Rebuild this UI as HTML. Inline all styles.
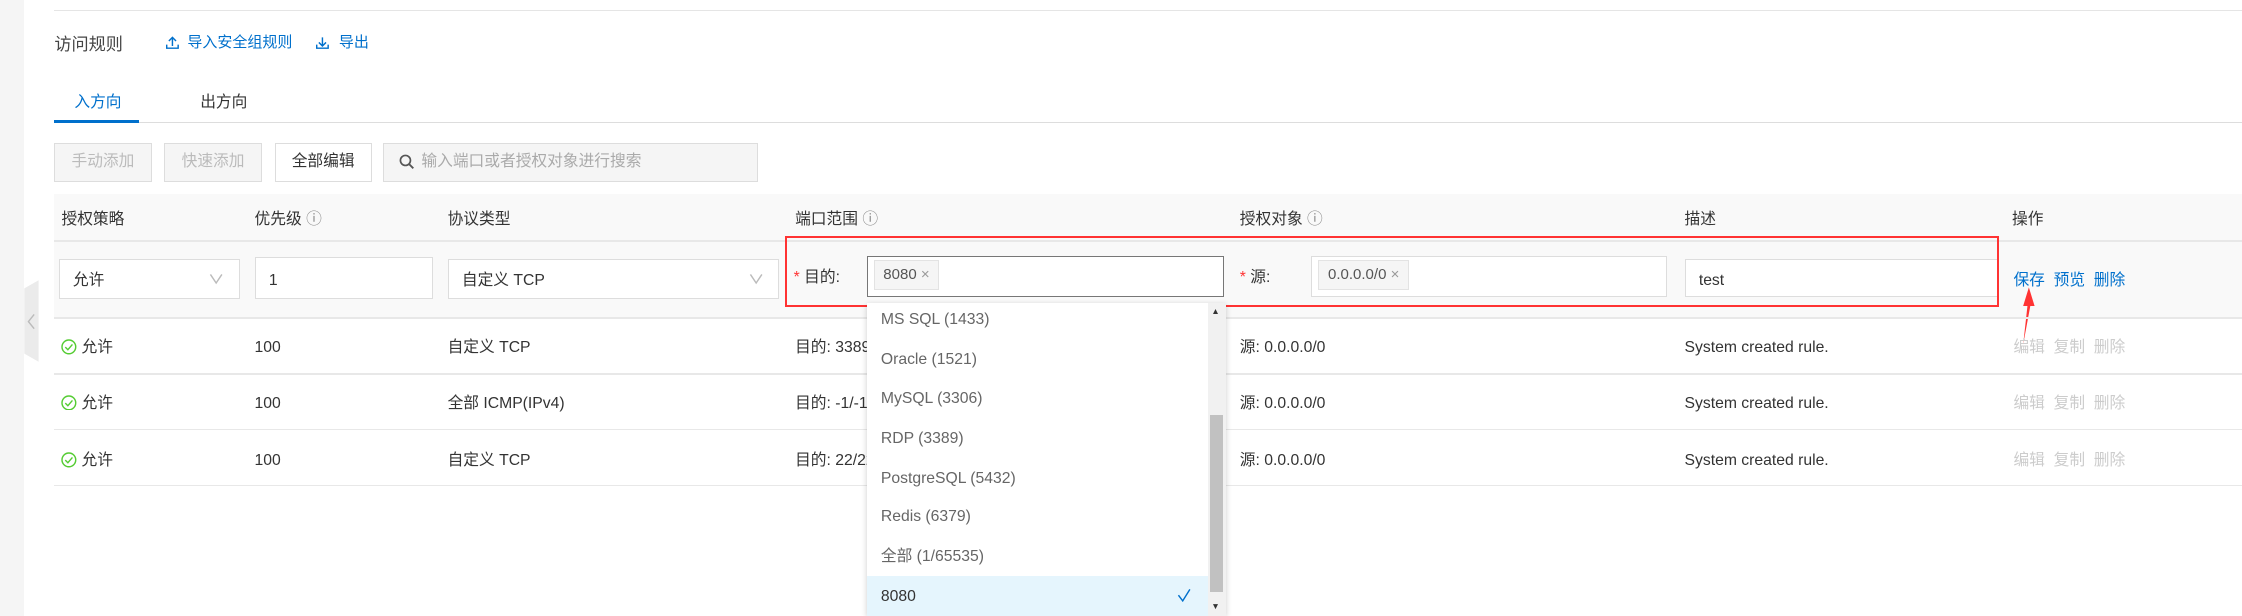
<!DOCTYPE html>
<html><head><meta charset="utf-8"><style>
html,body{margin:0;padding:0;background:#fff;overflow:hidden}
body{width:2242px;height:616px}
#z{zoom:1.43;position:relative;width:1568px;height:431px;font-family:"Liberation Sans","Noto Sans CJK SC",sans-serif;font-size:11px;color:#333}
.a{position:absolute;white-space:nowrap}
.blue{color:#0070cc}
.btn{position:absolute;top:100px;height:27px;width:68px;border:1px solid #ddd;box-sizing:border-box;text-align:center;line-height:25px;background:#f5f5f5;color:#bbb}
.inp{position:absolute;border:1px solid #ddd;background:#fff;box-sizing:border-box}
.hl{position:absolute;left:38px;right:0;height:1px;background:#e8e8e8}
.c{position:absolute;height:16px;line-height:16px;margin-top:-6px;white-space:nowrap}
.g{color:#ccc}
.tag{position:absolute;background:#f5f5f5;border:1px solid #e3e3e3;box-sizing:border-box;height:21px;line-height:19px;padding:0 6px;color:#555;font-size:10.5px}
.it{position:absolute;left:10px;color:#666;height:16px;line-height:16px;margin-top:-7px}
.ok{position:absolute;left:43px;margin-top:-5px}
</style></head><body><div id="z">
<div class="a" style="left:0;top:0;width:17px;height:431px;background:#f5f5f5"></div>
<div class="a" style="left:17px;top:196px;width:10px;height:57px;background:#ebebeb;clip-path:polygon(0 10%,100% 0,100% 100%,0 90%)"></div>
<svg class="a" style="left:19px;top:219px" width="6" height="12"><path d="M5 1L1 6l4 5" fill="none" stroke="#bbb"/></svg>
<div class="a" style="left:38px;top:7px;right:0;height:1px;background:#e5e5e5"></div>
<div class="a" style="left:38px;top:21px;font-size:12px;color:#444">访问规则</div>
<svg class="a" style="left:116px;top:25px" width="9" height="9"><path d="M4.5 7V1M2 3.5l2.5-2.5 2.5 2.5M0.5 6v2.5h8V6" fill="none" stroke="#0070cc"/></svg>
<div class="a blue" style="left:131px;top:22px;font-size:10.5px">导入安全组规则</div>
<svg class="a" style="left:221px;top:25px" width="9" height="9"><path d="M4.5 1v6M2 4.5l2.5 2.5 2.5-2.5M0.5 6v2.5h8V6" fill="none" stroke="#0070cc"/></svg>
<div class="a blue" style="left:237px;top:22px;font-size:10.5px">导出</div>
<div class="a blue" style="left:52px;top:62px">入方向</div>
<div class="a" style="left:140px;top:62px">出方向</div>
<div class="a" style="left:38px;top:85px;right:0;height:1px;background:#ddd"></div>
<div class="a" style="left:38px;top:84px;width:59px;height:2px;background:#0070cc"></div>
<div class="btn" style="left:38px">手动添加</div>
<div class="btn" style="left:115px">快速添加</div>
<div class="btn" style="left:192px;background:#fff;color:#333">全部编辑</div>
<div class="btn" style="left:268px;width:262px;text-align:left;padding-left:26px;color:#aaa">输入端口或者授权对象进行搜索</div>
<svg class="a" style="left:279px;top:108px" width="11" height="11"><circle cx="4.5" cy="4.5" r="3.5" fill="none" stroke="#555" stroke-width="1.2"/><path d="M7 7l3 3" stroke="#555" stroke-width="1.3"/></svg>
<div class="a" style="left:38px;top:136px;right:0;height:86px;background:#f9f9f9"></div>
<div class="hl" style="top:168px"></div>
<div class="c" style="left:43px;top:152px">授权策略</div>
<div class="c" style="left:178px;top:152px">优先级 <span style="color:#888">ⓘ</span></div>
<div class="c" style="left:313px;top:152px">协议类型</div>
<div class="c" style="left:556px;top:152px">端口范围 <span style="color:#888">ⓘ</span></div>
<div class="c" style="left:867px;top:152px">授权对象 <span style="color:#888">ⓘ</span></div>
<div class="c" style="left:1178px;top:152px">描述</div>
<div class="c" style="left:1407px;top:152px">操作</div>
<div class="inp" style="left:41px;top:181px;width:127px;height:28px"></div>
<div class="c" style="left:51px;top:195px">允许</div>
<svg class="a" style="left:146px;top:191px" width="10" height="8"><path d="M1 1l4 6 4-6" fill="none" stroke="#bbb"/></svg>
<div class="inp" style="left:178px;top:180px;width:125px;height:29px"></div>
<div class="c" style="left:188px;top:195px">1</div>
<div class="inp" style="left:313px;top:181px;width:232px;height:28px"></div>
<div class="c" style="left:323px;top:195px">自定义 TCP</div>
<svg class="a" style="left:524px;top:191px" width="10" height="8"><path d="M1 1l4 6 4-6" fill="none" stroke="#bbb"/></svg>
<div class="c" style="left:555px;top:193px"><span style="color:#f33">*</span> 目的:</div>
<div class="inp" style="left:606px;top:179px;width:250px;height:29px;border-color:#777"></div>
<div class="tag" style="left:611px;top:182px">8080 <span style="color:#999">×</span></div>
<div class="c" style="left:867px;top:193px"><span style="color:#f33">*</span> 源:</div>
<div class="inp" style="left:917px;top:179px;width:249px;height:29px"></div>
<div class="tag" style="left:922px;top:182px">0.0.0.0/0 <span style="color:#999">×</span></div>
<div class="inp" style="left:1178px;top:181px;width:219px;height:27px"></div>
<div class="c" style="left:1188px;top:195px">test</div>
<div class="c blue" style="left:1408px;top:195px">保存 &nbsp;预览 &nbsp;删除</div>
<div class="a" style="left:549px;top:165px;width:846px;height:47px;border:2px solid #f33"></div>
<svg class="a" style="left:1410px;top:200px" width="14" height="42"><path d="M9 1L5 14h3L5 41 10 14h3z" fill="#f33"/></svg>
<div class="hl" style="top:222px"></div>
<div class="hl" style="top:261px"></div>
<div class="hl" style="top:300px"></div>
<div class="hl" style="top:339px"></div>
<svg class="ok" style="top:242px" width="11" height="11"><circle cx="5.5" cy="5.5" r="4.8" fill="none" stroke="#5c3"/><path d="M3 5.7l1.8 1.8L8 3.8" fill="none" stroke="#5c3"/></svg>
<div class="c" style="left:57px;top:242px">允许</div><div class="c" style="left:178px;top:242px">100</div><div class="c" style="left:313px;top:242px">自定义 TCP</div><div class="c" style="left:556px;top:242px">目的: 3389/3389</div><div class="c" style="left:867px;top:242px">源: 0.0.0.0/0</div><div class="c" style="left:1178px;top:242px">System created rule.</div><div class="c g" style="left:1408px;top:242px">编辑 &nbsp;复制 &nbsp;删除</div>
<svg class="ok" style="top:281px" width="11" height="11"><circle cx="5.5" cy="5.5" r="4.8" fill="none" stroke="#5c3"/><path d="M3 5.7l1.8 1.8L8 3.8" fill="none" stroke="#5c3"/></svg>
<div class="c" style="left:57px;top:281px">允许</div><div class="c" style="left:178px;top:281px">100</div><div class="c" style="left:313px;top:281px">全部 ICMP(IPv4)</div><div class="c" style="left:556px;top:281px">目的: -1/-1</div><div class="c" style="left:867px;top:281px">源: 0.0.0.0/0</div><div class="c" style="left:1178px;top:281px">System created rule.</div><div class="c g" style="left:1408px;top:281px">编辑 &nbsp;复制 &nbsp;删除</div>
<svg class="ok" style="top:321px" width="11" height="11"><circle cx="5.5" cy="5.5" r="4.8" fill="none" stroke="#5c3"/><path d="M3 5.7l1.8 1.8L8 3.8" fill="none" stroke="#5c3"/></svg>
<div class="c" style="left:57px;top:321px">允许</div><div class="c" style="left:178px;top:321px">100</div><div class="c" style="left:313px;top:321px">自定义 TCP</div><div class="c" style="left:556px;top:321px">目的: 22/22</div><div class="c" style="left:867px;top:321px">源: 0.0.0.0/0</div><div class="c" style="left:1178px;top:321px">System created rule.</div><div class="c g" style="left:1408px;top:321px">编辑 &nbsp;复制 &nbsp;删除</div>
<div class="a" style="left:606px;top:212px;width:251px;height:219px;background:#fff;box-shadow:0 1px 4px rgba(0,0,0,.2);overflow:hidden">
<div class="a" style="left:0;top:191px;width:239px;height:28px;background:#e5f5fd"></div>
<div class="it" style="top:11px">MS SQL (1433)</div>
<div class="it" style="top:39px">Oracle (1521)</div>
<div class="it" style="top:66px">MySQL (3306)</div>
<div class="it" style="top:94px">RDP (3389)</div>
<div class="it" style="top:122px">PostgreSQL (5432)</div>
<div class="it" style="top:149px">Redis (6379)</div>
<div class="it" style="top:177px">全部 (1/65535)</div>
<div class="it" style="top:205px;color:#333">8080</div>
<svg class="a" style="left:217px;top:199px" width="10" height="10"><path d="M1 5l3 4 5-8" fill="none" stroke="#0070cc"/></svg>
<div class="a" style="left:239px;top:0;width:12px;height:219px;background:#f1f1f1"></div>
<div class="a" style="left:240px;top:78px;width:9px;height:124px;background:#c1c1c1"></div>
<div class="a" style="left:241px;top:2px;font-size:6px;color:#333">▲</div>
<div class="a" style="left:241px;top:208px;font-size:6px;color:#333">▼</div>
</div>
</div></body></html>
